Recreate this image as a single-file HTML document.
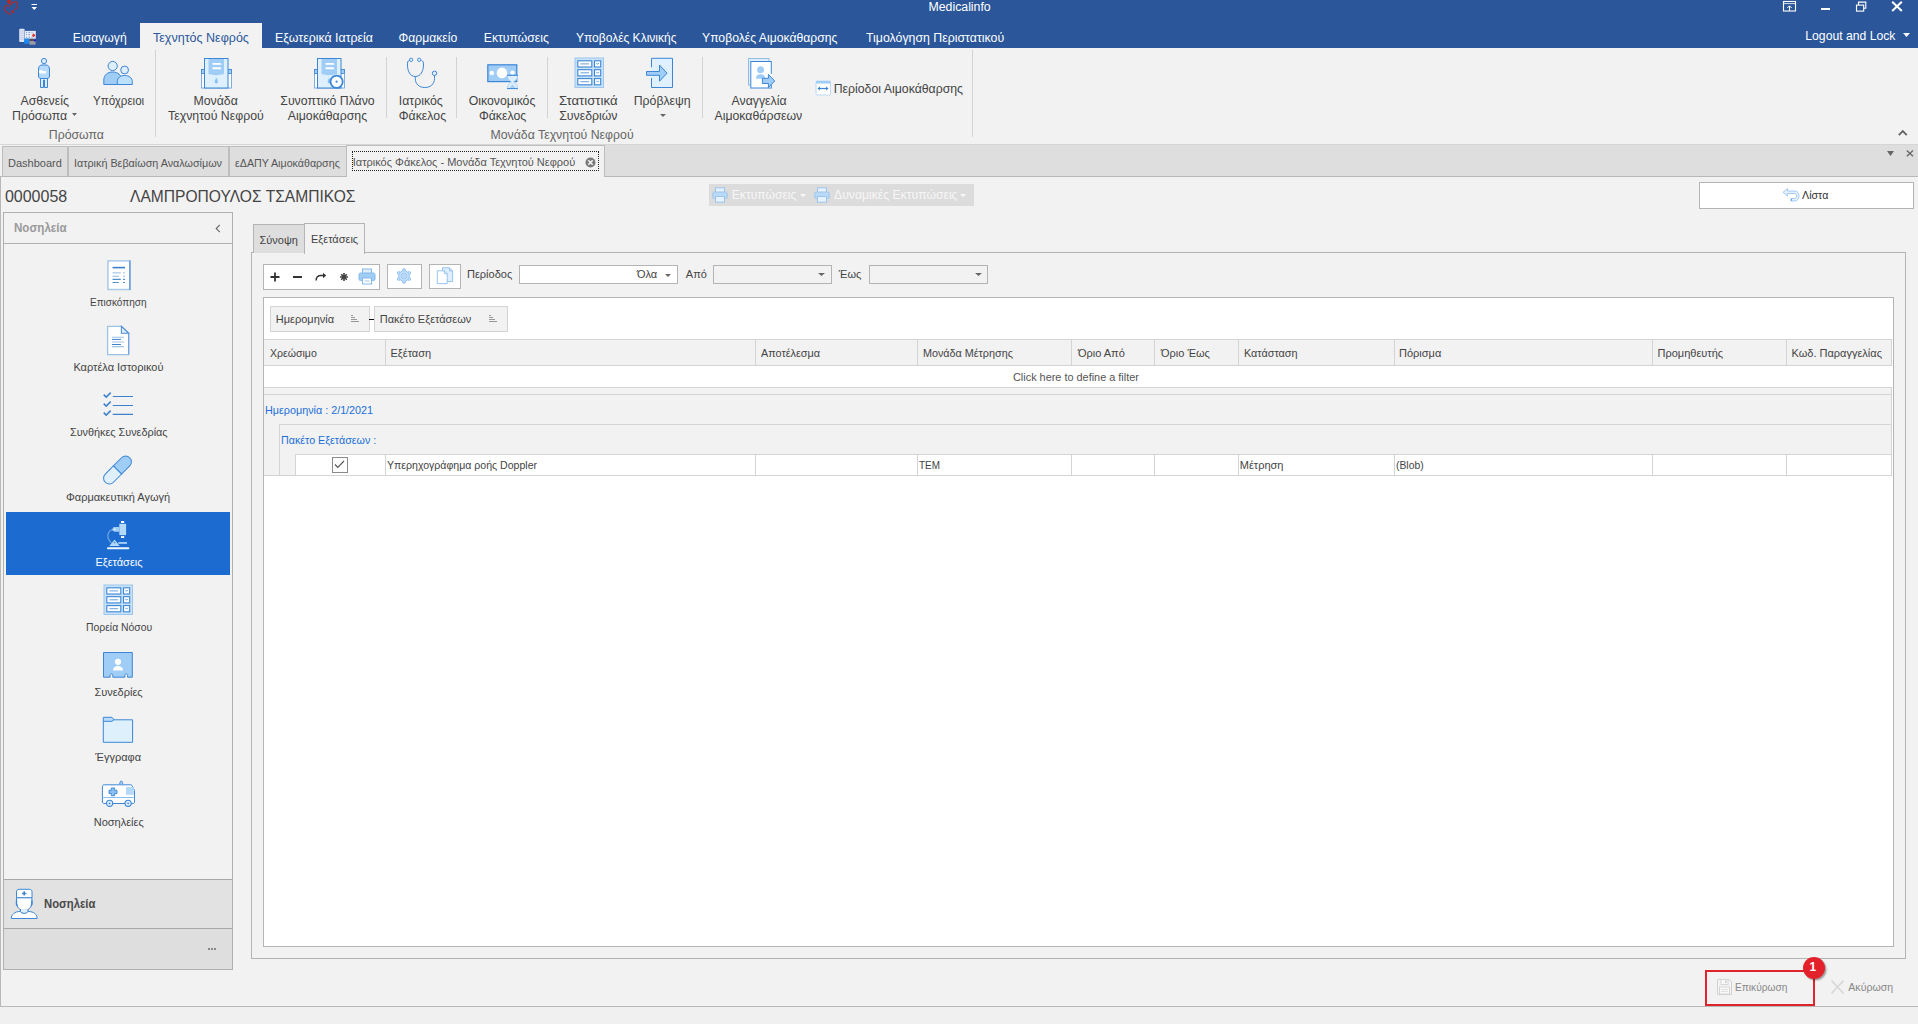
<!DOCTYPE html>
<html><head><meta charset="utf-8">
<style>
html,body{margin:0;padding:0;}
body{width:1918px;height:1024px;position:relative;overflow:hidden;background:#f2f2f2;font-family:"Liberation Sans",sans-serif;color:#444;}
.a{position:absolute;}
.t{position:absolute;white-space:nowrap;line-height:1;}
svg{position:absolute;overflow:visible;}
.f12{font-size:12.3px;}
.f11{font-size:11px;}
.rt{color:#444;}
.sep{position:absolute;width:1px;background:#d3d3d3;}
</style></head><body>

<!-- TITLE BAR -->
<div class="a" style="left:0;top:0;width:1918px;height:48px;background:#2b579a;"></div>
<svg style="left:0;top:0" width="24" height="18" viewBox="0 0 24 18">
<ellipse cx="9" cy="1.8" rx="1.9" ry="2.3" fill="#c0261c"/>
<path d="M9 5.8 C7 5.6 5.3 5.6 4.6 6.7 C4 8 4.3 9.8 6 11.5 C7.5 13 9.5 14 11 14.7" stroke="#c0261c" stroke-width="1.2" fill="none" opacity="0.8"/>
<path d="M10.2 4 L9.4 8.3" stroke="#c0261c" stroke-width="0.8" opacity="0.6"/>
<path d="M10.8 4.8 C12 3 14 1.6 16 1.6 C17.2 1.6 17.6 2.5 17.5 4 C17.4 6.5 16.5 8.5 15 10" stroke="#c0261c" stroke-width="1.2" fill="none" opacity="0.8"/>
<circle cx="12.6" cy="11.7" r="1.4" fill="#c0261c"/>
</svg>
<svg style="left:31px;top:3px" width="8" height="8" viewBox="0 0 8 8"><rect x="0.5" y="1" width="5.5" height="1" fill="#fff"/><path d="M0.5 4 L6 4 L3.25 7 Z" fill="#fff"/></svg>
<div class="t" style="left:928.5px;top:0.8px;font-size:12.3px;color:#fff;">Medicalinfo</div>
<!-- window buttons -->
<svg style="left:1782px;top:1px" width="15" height="11" viewBox="0 0 15 11"><rect x="1.5" y="0.5" width="12" height="9.5" fill="none" stroke="#fff" stroke-width="1.1"/><path d="M1.5 2.6 H13.5" stroke="#fff" stroke-width="0.8"/><path d="M7.5 10 V5 M5.3 7 L7.5 4.8 L9.7 7" stroke="#fff" stroke-width="1" fill="none"/></svg>
<div class="a" style="left:1821px;top:8px;width:9px;height:2px;background:#fff;"></div>
<svg style="left:1855px;top:1px" width="12" height="11" viewBox="0 0 12 11"><rect x="1.5" y="4.1" width="7.2" height="6" fill="none" stroke="#fff" stroke-width="1.1"/><path d="M3.5 4 V1.1 H10.8 V7.3 H8.8" fill="none" stroke="#fff" stroke-width="1.1"/></svg>
<svg style="left:1891px;top:1px" width="12" height="11" viewBox="0 0 12 11"><path d="M1.2 0.8 L10.8 10 M10.8 0.8 L1.2 10" stroke="#fff" stroke-width="2"/></svg>

<!-- app icon -->
<svg style="left:16px;top:26px" width="24" height="22" viewBox="0 0 24 22">
<rect x="3.2" y="2.8" width="5.4" height="13.1" rx="1" fill="#dfe5f5"/>
<path d="M3.8 5 H8 M3.8 7.2 H8 M3.8 9.4 H8 M3.8 11.6 H8 M3.8 13.2 H8" stroke="#b8c6e6" stroke-width="0.7"/>
<rect x="9" y="4.9" width="10.8" height="7.8" fill="#e8ecf8"/>
<path d="M10 6.4 h1 M12.5 6.4 h1.5 M15.5 6.4 h1 M10 8.6 h1 M12.5 8.6 h1.5 M10 11.3 h1 M12.5 11.3 h1.5 M15.5 11.3 h1" stroke="#6a8fd0" stroke-width="0.9"/>
<path d="M17.6 7.2 L19.4 9.5 L17.6 11.2 L15.8 9.5 Z" fill="#e03a30"/>
<rect x="8.2" y="12.7" width="5.1" height="5.1" fill="#1a88f0"/>
<rect x="13.5" y="12.9" width="6.1" height="5.8" fill="#9a9aa4"/>
<rect x="13.7" y="13" width="4" height="2" fill="#5a4a40"/>
<rect x="17.8" y="13.3" width="2" height="2" fill="#1010d0"/>
</svg>

<!-- ribbon tabs -->
<div class="a" style="left:140px;top:23px;width:122px;height:25px;background:#f2f2f2;"></div>
<div class="t" style="left:72.8px;top:31.6px;font-size:12.2px;color:#fff;">Εισαγωγή</div>
<div class="t" style="left:152.5px;top:31.6px;font-size:12.2px;color:#2b579a;transform:scaleX(1.027);transform-origin:0 0;">Τεχνητός Νεφρός</div>
<div class="t" style="left:274.8px;top:31.6px;font-size:12.2px;color:#fff;transform:scaleX(1.015);transform-origin:0 0;">Εξωτερικά Ιατρεία</div>
<div class="t" style="left:398.5px;top:31.6px;font-size:12.2px;color:#fff;">Φαρμακείο</div>
<div class="t" style="left:483.8px;top:31.6px;font-size:12.2px;color:#fff;">Εκτυπώσεις</div>
<div class="t" style="left:575.5px;top:31.6px;font-size:12.2px;color:#fff;transform:scaleX(0.985);transform-origin:0 0;">Υποβολές Κλινικής</div>
<div class="t" style="left:702px;top:31.6px;font-size:12.2px;color:#fff;">Υποβολές Αιμοκάθαρσης</div>
<div class="t" style="left:865.5px;top:31.6px;font-size:12.2px;color:#fff;transform:scaleX(1.012);transform-origin:0 0;">Τιμολόγηση Περιστατικού</div>
<div class="t" style="left:1805.3px;top:29.6px;font-size:12.2px;color:#fff;">Logout and Lock</div>
<svg style="left:1903px;top:33px" width="7" height="4" viewBox="0 0 7 4"><path d="M0 0 H7 L3.5 4 Z" fill="#fff"/></svg>

<!-- RIBBON -->
<div class="a" style="left:0;top:144px;width:1918px;height:1px;background:#d6d6d6;"></div>
<div class="sep" style="left:155px;top:50px;height:87px;"></div>
<div class="sep" style="left:386px;top:57px;height:61px;"></div>
<div class="sep" style="left:456px;top:57px;height:61px;"></div>
<div class="sep" style="left:547px;top:57px;height:61px;"></div>
<div class="sep" style="left:702px;top:57px;height:61px;"></div>
<div class="sep" style="left:972px;top:50px;height:87px;"></div>
<svg style="left:1898px;top:130px" width="10" height="6" viewBox="0 0 10 6"><path d="M0.8 5.2 L4.8 1.2 L8.8 5.2" fill="none" stroke="#666" stroke-width="1.9"/></svg>

<!-- ribbon item text -->
<div class="t f12" style="left:20.5px;top:95px;">Ασθενείς</div>
<div class="t f12" style="left:12px;top:110.4px;">Πρόσωπα</div>
<svg style="left:72px;top:113px" width="5" height="3" viewBox="0 0 5 3"><path d="M0 0H5L2.5 3Z" fill="#666"/></svg>
<div class="t f12" style="left:92.8px;top:95px;transform:scaleX(0.94);transform-origin:0 0;">Υπόχρειοι</div>
<div class="t f12" style="left:48.8px;top:128.9px;color:#666;">Πρόσωπα</div>

<div class="t f12" style="left:193.5px;top:95.2px;">Μονάδα</div>
<div class="t f12" style="left:168.1px;top:110.4px;">Τεχνητού Νεφρού</div>
<div class="t f12" style="left:280.3px;top:95.2px;">Συνοπτικό Πλάνο</div>
<div class="t f12" style="left:287.8px;top:110.4px;">Αιμοκάθαρσης</div>
<div class="t f12" style="left:398.8px;top:95.2px;">Ιατρικός</div>
<div class="t f12" style="left:398.8px;top:110.4px;">Φάκελος</div>
<div class="t f12" style="left:468.7px;top:95.2px;">Οικονομικός</div>
<div class="t f12" style="left:478.9px;top:110.4px;">Φάκελος</div>
<div class="t f12" style="left:559.2px;top:95.2px;transform:scaleX(1.07);transform-origin:0 0;">Στατιστικά</div>
<div class="t f12" style="left:559.2px;top:110.4px;">Συνεδριών</div>
<div class="t f12" style="left:633.7px;top:95.2px;">Πρόβλεψη</div>
<svg style="left:659.5px;top:113.5px" width="6" height="3" viewBox="0 0 6 3"><path d="M0 0H6L3 3Z" fill="#666"/></svg>
<div class="t f12" style="left:731.5px;top:95.2px;">Αναγγελία</div>
<div class="t f12" style="left:714.5px;top:110.4px;">Αιμοκαθάρσεων</div>
<div class="t f12" style="left:833.7px;top:83.4px;">Περίοδοι Αιμοκάθαρσης</div>
<div class="t f12" style="left:490.5px;top:129.3px;color:#666;">Μονάδα Τεχνητού Νεφρού</div>

<!-- Ασθενείς person -->
<svg style="left:37px;top:57px" width="14" height="32" viewBox="0 0 14 32">
<circle cx="7" cy="4" r="2.6" fill="#deeefd" stroke="#3d86d6" stroke-width="1"/>
<path d="M3.5 21.5 V30.5 H6.5 V23 H7.5 V30.5 H10.5 V21.5 Z" fill="#deeefd" stroke="#3d86d6" stroke-width="1"/>
<path d="M1.5 12 C1.5 9 3.5 8 5 8 H9 C10.5 8 12.5 9 12.5 12 V19 C12.5 20.5 11.5 21.5 10 21.5 H4 C2.5 21.5 1.5 20.5 1.5 19 Z" fill="#b4d9fb" stroke="#3d86d6" stroke-width="1"/>
<path d="M2 13.5 C3.5 12.5 5 13 6 14 H8.5 C9.5 14.5 9.5 16.5 8 16.5 H3 C2 16 1.5 14.5 2 13.5 Z" fill="#fff"/>
</svg>
<!-- Υπόχρειοι -->
<svg style="left:103px;top:60px" width="31" height="26" viewBox="0 0 31 26">
<circle cx="9.7" cy="6" r="4.6" fill="#deeefd" stroke="#3d86d6" stroke-width="1"/>
<path d="M0.8 24.5 V20 C0.8 15 4.5 12 9.7 12 C14.9 12 18.6 15 18.6 20 V24.5 Z" fill="#9fcdf6" stroke="#3d86d6" stroke-width="1"/>
<circle cx="21.6" cy="10" r="3.9" fill="#deeefd" stroke="#3d86d6" stroke-width="1"/>
<path d="M14.3 24.5 V21.5 C14.3 18 17 15.5 21.6 15.5 C26.2 15.5 29.3 18 29.3 21.5 V24.5 Z" fill="#bde0fc" stroke="#3d86d6" stroke-width="1"/>
</svg>
<!-- Μονάδα Τεχνητού Νεφρού -->
<svg style="left:200px;top:57px" width="33" height="32" viewBox="0 0 33 32">
<rect x="1.5" y="12.5" width="30" height="18.5" fill="#fff" stroke="#3d86d6" stroke-width="0.8" opacity="0.8"/>
<rect x="1.5" y="12.5" width="30" height="4" fill="#9fcdf6" stroke="#3d86d6" stroke-width="0.8"/>
<rect x="4.5" y="1.5" width="23.5" height="29.5" fill="#deeffd" stroke="#3d86d6" stroke-width="1"/>
<path d="M8.5 2 H24 V17 C19 18.5 13.5 18.5 8.5 17 Z" fill="#9fcdf6"/>
<path d="M12.5 6 H20.5 L21.5 7.8 H12.5 Z M12.5 10.3 H20.5 L21.5 12.2 H12.5 Z" fill="#fff"/>
<path d="M16.3 20.8 C15 22.8 14.7 23.8 14.7 24.8 A1.6 1.6 0 0 0 17.9 24.8 C17.9 23.8 17.6 22.8 16.3 20.8 Z" fill="#86c2f5"/>
</svg>
<!-- Συνοπτικό Πλάνο -->
<svg style="left:313px;top:57px" width="35" height="34" viewBox="0 0 35 34">
<rect x="1.5" y="12.5" width="30" height="18.5" fill="#fff" stroke="#3d86d6" stroke-width="0.8" opacity="0.8"/>
<rect x="1.5" y="12.5" width="30" height="4" fill="#9fcdf6" stroke="#3d86d6" stroke-width="0.8"/>
<rect x="4.5" y="1.5" width="23.5" height="29.5" fill="#deeffd" stroke="#3d86d6" stroke-width="1"/>
<path d="M8.5 2 H24 V17 C19 18.5 13.5 18.5 8.5 17 Z" fill="#9fcdf6"/>
<path d="M12.5 6 H20.5 L21.5 7.8 H12.5 Z M12.5 10.3 H20.5 L21.5 12.2 H12.5 Z" fill="#fff"/>
<path d="M16.3 20.8 C15 22.8 14.7 23.8 14.7 24.8 A1.6 1.6 0 0 0 17.9 24.8 C17.9 23.8 17.6 22.8 16.3 20.8 Z" fill="#86c2f5"/>
<circle cx="23.6" cy="24.7" r="6.1" fill="#fff" stroke="#3d86d6" stroke-width="1.8"/>
<circle cx="23.6" cy="24.7" r="1.1" fill="#3d86d6"/>
</svg>
<!-- Stethoscope -->
<svg style="left:405px;top:57px" width="33" height="33" viewBox="0 0 33 33">
<path d="M4.5 3.5 C2.5 4 2.5 5 2.5 8 C2.5 14 5 19.5 10.3 19.5 C15.6 19.5 18.5 14 18.5 8 C18.5 5 18 4 16.5 3.5" fill="none" stroke="#3d86d6" stroke-width="1"/>
<circle cx="6.1" cy="2.8" r="1.7" fill="#deeefd" stroke="#3d86d6" stroke-width="0.9"/>
<circle cx="14.2" cy="2.8" r="1.7" fill="#deeefd" stroke="#3d86d6" stroke-width="0.9"/>
<path d="M10.3 19.5 V21.5 C10.3 27 14 30.5 19.8 30.5 C25.6 30.5 29.5 27 29.5 21.5 V18.6" fill="none" stroke="#3d86d6" stroke-width="1"/>
<circle cx="29.5" cy="16.3" r="2.2" fill="#deeefd" stroke="#3d86d6" stroke-width="1"/>
</svg>
<!-- Οικονομικός -->
<svg style="left:486px;top:63px" width="33" height="27" viewBox="0 0 33 27">
<rect x="1.8" y="1.8" width="29" height="16.8" fill="#9fcdf6" stroke="#3d86d6" stroke-width="1.2"/>
<circle cx="16" cy="9.9" r="5.3" fill="#fff"/>
<circle cx="5.8" cy="10" r="2.3" fill="#fff"/>
<circle cx="26.5" cy="9.6" r="2.2" fill="#fff"/>
<path d="M21.5 12.5 H31.5 V14 C31.5 16.5 28.5 18 27.5 19 C28.5 20 31.5 21.5 31.5 24 V25.5 H21.5 V24 C21.5 21.5 24.5 20 25.5 19 C24.5 18 21.5 16.5 21.5 14 Z" fill="#deeefd" stroke="#9fcdf6" stroke-width="0.8"/>
<path d="M21 12.3 H32 M21 25.6 H32" stroke="#3d86d6" stroke-width="1"/>
<path d="M23.5 24.8 L26.5 21.5 L29.5 24.8 Z" fill="#9fcdf6"/>
</svg>
<!-- Στατιστικά -->
<svg style="left:574px;top:57px" width="31" height="32" viewBox="0 0 31 32">
<rect x="1" y="1" width="28.5" height="29.5" fill="#c8e2f8" stroke="#9cc6ec" stroke-width="1"/>
<g fill="#fff" stroke="#3d86d6" stroke-width="1.1">
<rect x="3.8" y="3.8" width="14" height="6.2"/><rect x="20.5" y="3.8" width="6.2" height="6.2"/>
<rect x="3.8" y="12.7" width="14" height="6.2"/><rect x="20.5" y="12.7" width="6.2" height="6.2"/>
<rect x="3.8" y="21.6" width="14" height="6.2"/><rect x="20.5" y="21.6" width="6.2" height="6.2"/>
</g>
<g fill="none" stroke="#3d86d6" stroke-width="0.8">
<path d="M6.5 6.9 H15 M6.5 15.8 H15 M6.5 24.7 H15"/>
<path d="M22.3 6 L23.6 7.3 L24.9 6 M22.3 14.9 L23.6 16.2 L24.9 14.9 M22.3 23.8 L23.6 25.1 L24.9 23.8"/>
</g>
</svg>
<!-- Πρόβλεψη -->
<svg style="left:645px;top:57px" width="30" height="32" viewBox="0 0 30 32">
<path d="M6.5 10.3 V1.3 H27.5 V30.5 H6.5 V21" fill="#dff0fe" stroke="#3d86d6" stroke-width="1"/>
<path d="M1.5 14.5 H14.5 V8 L22 16.2 L14.5 24.2 V18.3 H1.5 Z" fill="#9fcdf6" stroke="#3d86d6" stroke-width="1"/>
</svg>
<!-- Αναγγελία -->
<svg style="left:747px;top:57px" width="30" height="32" viewBox="0 0 30 32">
<rect x="1.5" y="1.5" width="20.5" height="26.5" fill="#deeefd" stroke="#8fbde8" stroke-width="1"/>
<rect x="3.8" y="4.5" width="20.5" height="26.5" fill="#fff" stroke="#3d86d6" stroke-width="1"/>
<circle cx="13.6" cy="12.7" r="3.5" fill="#9fcdf6"/>
<path d="M8.9 21.8 C8.9 18.5 11 17.2 13.6 17.2 C16.2 17.2 18.2 18.5 18.2 21.8 Z" fill="#9fcdf6"/>
<rect x="20" y="17" width="5" height="9" fill="#fff"/>
<path d="M15.4 21.3 H21.4 V17.4 L27.7 24 L21.4 30.6 V26.5 H15.4 Z" fill="#9fcdf6" stroke="#3d86d6" stroke-width="1"/>
</svg>
<!-- Περίοδοι small -->
<svg style="left:815px;top:80px" width="17" height="17" viewBox="0 0 17 17">
<rect x="1" y="1" width="14.5" height="14" rx="1" fill="#fff" stroke="#bcdaf5" stroke-width="1"/>
<rect x="1" y="1" width="14.5" height="2.5" fill="#9fcdf6"/>
<path d="M3.5 8.5 H12.5" stroke="#3d86d6" stroke-width="1.2"/>
<path d="M2.5 8.5 L5 6.5 V10.5 Z M13.5 8.5 L11 6.5 V10.5 Z" fill="#3d86d6"/>
</svg>


<!-- DOC TABS -->
<div class="a" style="left:0;top:145px;width:1918px;height:862px;background:#f2f2f2;"></div>

<div class="a" style="left:605px;top:145px;width:1313px;height:31px;background:#dedede;"></div>
<div class="a" style="left:0;top:176px;width:1918px;height:1px;background:#b8b8b8;"></div>
<div class="a" style="left:2px;top:146px;width:64px;height:29px;background:#dedede;border:1px solid #bdbdbd;border-bottom:none;"></div>
<div class="a" style="left:68px;top:146px;width:159px;height:29px;background:#dedede;border:1px solid #bdbdbd;border-bottom:none;"></div>
<div class="a" style="left:229px;top:146px;width:116px;height:29px;background:#dedede;border:1px solid #bdbdbd;border-bottom:none;"></div>
<div class="a" style="left:346px;top:145px;width:257px;height:31px;background:#f2f2f2;border:1px solid #bdbdbd;border-bottom:none;"></div><div class="a" style="left:347px;top:176px;width:257px;height:1px;background:#f2f2f2;"></div>
<div class="a" style="left:352px;top:151px;width:245px;height:18px;border:1px dotted #222;"></div>
<div class="t f11" style="left:8px;top:157.7px;color:#555;">Dashboard</div>
<div class="t f11" style="left:74px;top:157.7px;color:#555;transform:scaleX(0.98);transform-origin:0 0;">Ιατρική Βεβαίωση Αναλωσίμων</div>
<div class="t f11" style="left:234.8px;top:157.7px;color:#555;transform:scaleX(0.97);transform-origin:0 0;">εΔΑΠΥ Αιμοκάθαρσης</div>
<div class="t f11" style="left:352.8px;top:157.2px;color:#555;">Ιατρικός Φάκελος - Μονάδα Τεχνητού Νεφρού</div>
<svg style="left:585px;top:157px" width="11" height="11" viewBox="0 0 11 11"><circle cx="5.5" cy="5.5" r="5" fill="#7a7a7a"/><path d="M3.3 3.3 L7.7 7.7 M7.7 3.3 L3.3 7.7" stroke="#f2f2f2" stroke-width="1.6"/></svg>
<svg style="left:1887px;top:151px" width="7" height="5" viewBox="0 0 7 5"><path d="M0 0 H7 L3.5 5 Z" fill="#666"/></svg>
<svg style="left:1906px;top:150px" width="8" height="7" viewBox="0 0 8 7"><path d="M0.8 0.5 L7 6.2 M7 0.5 L0.8 6.2" stroke="#666" stroke-width="1.3"/></svg>

<!-- content frame -->
<div class="a" style="left:0;top:177px;width:1px;height:830px;background:#b8b8b8;"></div>
<div class="a" style="left:0;top:1006px;width:1918px;height:1px;background:#b8b8b8;"></div>
<div class="a" style="left:0;top:1007px;width:1918px;height:17px;background:#f0f0f0;"></div>

<!-- patient header -->
<div class="t" style="left:4.9px;top:189px;font-size:16px;color:#444;">0000058</div>
<div class="t" style="left:130px;top:188.8px;font-size:15.6px;color:#444;">ΛΑΜΠΡΟΠΟΥΛΟΣ ΤΣΑΜΠΙΚΟΣ</div>

<!-- print toolbar (disabled) -->
<div class="a" style="left:709px;top:184px;width:265px;height:22px;background:#dcdcdc;"></div>
<svg style="left:712px;top:187px" width="16" height="16" viewBox="0 0 16 16"><rect x="3.5" y="0.8" width="9" height="5" fill="#e6f1fc" stroke="#9cc6ec" stroke-width="1"/><rect x="0.8" y="5" width="14.4" height="6.5" rx="1.5" fill="#b9d9f6" stroke="#9cc6ec" stroke-width="1"/><rect x="3.5" y="9.5" width="9" height="5.7" fill="#e6f1fc" stroke="#9cc6ec" stroke-width="1"/></svg>
<div class="t" style="left:731.8px;top:188.8px;font-size:12.1px;color:#f7f7f7;">Εκτυπώσεις</div>
<svg style="left:800px;top:194px" width="6" height="3" viewBox="0 0 6 3"><path d="M0 0H6L3 3Z" fill="#f7f7f7"/></svg>
<svg style="left:814px;top:187px" width="16" height="16" viewBox="0 0 16 16"><rect x="3.5" y="0.8" width="9" height="5" fill="#e6f1fc" stroke="#9cc6ec" stroke-width="1"/><rect x="0.8" y="5" width="14.4" height="6.5" rx="1.5" fill="#b9d9f6" stroke="#9cc6ec" stroke-width="1"/><rect x="3.5" y="9.5" width="9" height="5.7" fill="#e6f1fc" stroke="#9cc6ec" stroke-width="1"/></svg>
<div class="t" style="left:833.5px;top:188.8px;font-size:12.1px;color:#f7f7f7;transform:scaleX(1.008);transform-origin:0 0;">Δυναμικές Εκτυπώσεις</div>
<svg style="left:960px;top:194px" width="6" height="3" viewBox="0 0 6 3"><path d="M0 0H6L3 3Z" fill="#f7f7f7"/></svg>

<!-- Λίστα button -->
<div class="a" style="left:1699px;top:182px;width:213px;height:25px;background:#fff;border:1px solid #b4b4b4;"></div>
<svg style="left:1782px;top:187px" width="19" height="16" viewBox="0 0 19 16"><path d="M1 5.3 L5.6 1.5 V4 H13 C15.5 4 17 6.2 17 8.8 C17 11.5 15.5 14 13 14 H9 V11.5 H13 C14 11.5 14.5 10.2 14.5 8.8 C14.5 7.5 14 6.5 13 6.5 H5.6 V9 Z" fill="#e3f0fd" stroke="#9cc4ee" stroke-width="0.9" stroke-linejoin="round"/><path d="M9.3 11.6 V13.9" stroke="#6aa2e0" stroke-width="1"/></svg>
<div class="t f11" style="left:1802px;top:189.6px;color:#333;transform:scaleX(0.97);transform-origin:0 0;">Λίστα</div>


<!-- SIDEBAR -->
<div class="a" style="left:3px;top:212px;width:228px;height:756px;border:1px solid #b0b0b0;background:#f2f2f2;"></div>
<div class="a" style="left:4px;top:243px;width:228px;height:1px;background:#b0b0b0;"></div>
<div class="t" style="left:14px;top:221.6px;font-size:12px;font-weight:bold;color:#9a9a9a;transform:scaleX(0.965);transform-origin:0 0;">Νοσηλεία</div>
<svg style="left:215px;top:224px" width="6" height="9" viewBox="0 0 6 9"><path d="M4.8 0.8 L1.2 4.5 L4.8 8.2" fill="none" stroke="#666" stroke-width="1.1"/></svg>
<div class="a" style="left:6px;top:512px;width:224px;height:63px;background:#1b6bd1;"></div>
<div class="a" style="left:4px;top:879px;width:228px;height:1px;background:#a8a8a8;"></div>
<div class="a" style="left:4px;top:880px;width:228px;height:48px;background:#e2e2e2;"></div>
<div class="a" style="left:4px;top:928px;width:228px;height:1px;background:#a8a8a8;"></div>
<div class="a" style="left:4px;top:929px;width:228px;height:40px;background:#dedede;"></div>

<!-- nav labels -->
<div class="t f11" style="left:90.2px;top:296.9px;color:#444;transform:scaleX(0.91);transform-origin:0 0;">Επισκόπηση</div>
<div class="t f11" style="left:73.4px;top:362.1px;color:#444;">Καρτέλα Ιστορικού</div>
<div class="t f11" style="left:69.5px;top:426.9px;color:#444;transform:scaleX(0.985);transform-origin:0 0;">Συνθήκες Συνεδρίας</div>
<div class="t f11" style="left:66px;top:492.4px;color:#444;">Φαρμακευτική Αγωγή</div>
<div class="t f11" style="left:95.4px;top:556.9px;color:#fff;">Εξετάσεις</div>
<div class="t f11" style="left:86px;top:622.4px;color:#444;transform:scaleX(0.945);transform-origin:0 0;">Πορεία Νόσου</div>
<div class="t f11" style="left:94.4px;top:687.2px;color:#444;">Συνεδρίες</div>
<div class="t f11" style="left:95.3px;top:751.7px;color:#444;">Έγγραφα</div>
<div class="t f11" style="left:93.7px;top:816.5px;color:#444;">Νοσηλείες</div>
<div class="t" style="left:43.5px;top:897.8px;font-size:12px;font-weight:bold;color:#4a4a4a;transform:scaleX(0.94);transform-origin:0 0;">Νοσηλεία</div>
<div class="a" style="left:208px;top:948px;width:2px;height:2px;background:#888;"></div><div class="a" style="left:211px;top:948px;width:2px;height:2px;background:#888;"></div><div class="a" style="left:214px;top:948px;width:2px;height:2px;background:#888;"></div>

<!-- nav icons -->
<svg style="left:106px;top:259px" width="25" height="32" viewBox="0 0 25 32">
<rect x="1.9" y="1.9" width="22" height="28.6" fill="#fff" stroke="#a9c9e8" stroke-width="1.5"/>
<path d="M23.9 1.5 V30.9" stroke="#5d9bd8" stroke-width="1.4"/>
<path d="M6.5 8.6 H19" stroke="#3d80cc" stroke-width="1.6"/>
<path d="M6.5 13.9 H14.8 M17 13.9 H19" stroke="#a9c9e8" stroke-width="1.4"/>
<path d="M6.5 17.3 H12.8 M17 17.3 H19" stroke="#8bb6e0" stroke-width="1.1"/>
<path d="M6.5 20.4 H14.8 M17 20.4 H19 M6.5 23.5 H12.8 M17 23.5 H19" stroke="#4f8fd3" stroke-width="1.1"/>
</svg>
<svg style="left:106px;top:325px" width="25" height="31" viewBox="0 0 25 31">
<path d="M1.6 1.4 H15.4 L22.7 8.3 V29.6 H1.6 Z" fill="#fff" stroke="#9cc2e8" stroke-width="1.3"/>
<path d="M15.4 1.4 V8.3 H22.7 Z" fill="#deeefd" stroke="#4f8fd3" stroke-width="1.1"/>
<path d="M22.7 8.3 V29.6" stroke="#6aa2dc" stroke-width="1.1"/>
<path d="M5.9 12.2 H18 M5.9 17 H18 M5.9 21.6 H18" stroke="#9cc2e8" stroke-width="1.1"/>
<path d="M5.9 14.4 H15 M5.9 19.5 H15" stroke="#3d80cc" stroke-width="1"/>
</svg>
<svg style="left:102px;top:392px" width="32" height="25" viewBox="0 0 32 25">
<path d="M1.7 2.6 L4.2 5.1 L8.7 0.6 M1.7 11.6 L4.2 14.1 L8.7 9.6 M1.7 20.6 L4.2 23.1 L8.7 18.6" fill="none" stroke="#3d80cc" stroke-width="1.5"/>
<path d="M10.7 4.5 H31 M10.7 13.5 H31 M10.7 22.4 H31" stroke="#3d80cc" stroke-width="1.1"/>
</svg>
<svg style="left:99.3px;top:452px" width="37" height="36" viewBox="0 0 37 36">
<g transform="translate(18.5 18) rotate(-45)">
<path d="M0 -5.8 H11.5 A5.8 5.8 0 0 1 11.5 5.8 H0 Z" fill="#9fcdf6" stroke="#3d86d6" stroke-width="1"/>
<path d="M0 -5.8 H-11.5 A5.8 5.8 0 0 0 -11.5 5.8 H0 Z" fill="#deeffd" stroke="#3d86d6" stroke-width="1"/>
</g>
</svg>
<svg style="left:105px;top:520px" width="26" height="31" viewBox="0 0 26 31">
<path d="M8.5 9.3 C3 10 0.3 17 6.2 22.8" fill="none" stroke="#6aa2e0" stroke-width="1.3"/>
<rect x="2" y="27.2" width="22.3" height="2.1" rx="0.8" fill="#eef6fe"/>
<path d="M4.3 25.9 L9.5 19.6 L14.7 25.9 Z" fill="#b4d9fb"/>
<circle cx="9.5" cy="22.5" r="0.9" fill="#5d9be0"/>
<rect x="13.3" y="22" width="8.7" height="1.9" fill="#9fcdf6"/>
<rect x="14.3" y="3.8" width="6.8" height="11.3" fill="#b4d9fb"/>
<rect x="16" y="1" width="3.2" height="2" fill="#fff"/>
<rect x="16" y="16.1" width="3.2" height="1.9" fill="#fff"/>
<path d="M9.75 6.9 H14.3 V11.8 H9.75 A2.45 2.45 0 0 1 9.75 6.9 Z" fill="#9fcdf6"/>
<circle cx="9.8" cy="9.35" r="0.8" fill="#fff"/>
</svg>
<svg style="left:103px;top:584px" width="31" height="32" viewBox="0 0 31 32">
<rect x="1" y="1" width="28.5" height="29.5" fill="#c8e2f8" stroke="#9cc6ec" stroke-width="1"/>
<g fill="#fff" stroke="#3d86d6" stroke-width="1.1">
<rect x="3.8" y="3.8" width="14" height="6.2"/><rect x="20.5" y="3.8" width="6.2" height="6.2"/>
<rect x="3.8" y="12.7" width="14" height="6.2"/><rect x="20.5" y="12.7" width="6.2" height="6.2"/>
<rect x="3.8" y="21.6" width="14" height="6.2"/><rect x="20.5" y="21.6" width="6.2" height="6.2"/>
</g>
<g fill="none" stroke="#3d86d6" stroke-width="0.8">
<path d="M6.5 6.9 H15 M6.5 15.8 H15 M6.5 24.7 H15"/>
<path d="M22.3 6 L23.6 7.3 L24.9 6 M22.3 14.9 L23.6 16.2 L24.9 14.9 M22.3 23.8 L23.6 25.1 L24.9 23.8"/>
</g>
</svg>
<svg style="left:102px;top:651px" width="32" height="28" viewBox="0 0 32 28">
<path d="M1.5 1.5 H30.3 V26.2 H25.6 V24.5 C25.6 23.5 25 22.8 24.3 22.8 C23.5 22.8 22.9 23.5 22.9 24.5 V26.2 H10.8 V24.5 C10.8 23.5 10.2 22.8 9.5 22.8 C8.7 22.8 8.1 23.5 8.1 24.5 V26.2 H1.5 Z" fill="#9fcdf6" stroke="#3d86d6" stroke-width="1"/>
<circle cx="16" cy="10.8" r="3.1" fill="#fff"/>
<path d="M11 19.6 C11 16.5 13 15 16 15 C19 15 21 16.5 21 19.6 Z" fill="#fff"/>
</svg>
<svg style="left:102px;top:716px" width="32" height="28" viewBox="0 0 32 28">
<path d="M1.3 5 V26.3 H30.6 V3.8 H11 Z" fill="#dff0fd" stroke="#3d86d6" stroke-width="1"/>
<path d="M1.3 1.3 H10 L12 3.5 L10 5.3 H1.3 Z" fill="#b9dcfb" stroke="#3d86d6" stroke-width="1"/>
</svg>
<svg style="left:101px;top:780px" width="35" height="29" viewBox="0 0 35 29">
<path d="M18.3 4.5 L19.5 1.2 H21 L22.2 4.5 Z" fill="#9fcdf6" stroke="#3d86d6" stroke-width="0.8"/>
<path d="M3.5 4.6 H29.3 C30 4.6 30.6 5 31 5.6 L33.5 10.5 V22 C33.5 23 32.8 23.5 32 23.5 H3 C2 23.5 1.4 22.8 1.4 22 V6.8 C1.4 5.6 2.3 4.6 3.5 4.6 Z" fill="#fff" stroke="#3d86d6" stroke-width="1"/>
<path d="M1.8 5 H30" stroke="#9cc2e8" stroke-width="1"/>
<rect x="25" y="7" width="7.8" height="7.8" fill="#b4d9fb"/>
<path d="M1.5 17.5 H33.5" stroke="#86c0f4" stroke-width="1"/>
<path d="M10.3 8 H13.7 V10.3 H16 V13.5 H13.7 V15.8 H10.3 V13.5 H8 V10.3 H10.3 Z" fill="#86c0f4" stroke="#3d86d6" stroke-width="0.9"/>
<circle cx="8.6" cy="23.3" r="3.1" fill="#deeefd" stroke="#3d86d6" stroke-width="1.1"/><circle cx="8.6" cy="23.3" r="0.9" fill="#3d86d6"/>
<circle cx="27.1" cy="23.3" r="3.1" fill="#deeefd" stroke="#3d86d6" stroke-width="1.1"/><circle cx="27.1" cy="23.3" r="0.9" fill="#3d86d6"/>
</svg>
<svg style="left:10px;top:888px" width="28" height="32" viewBox="0 0 28 32">
<path d="M3.3 10 C3.3 6.5 4 5 7 5 H16" fill="none"/>
<path d="M6.5 9.8 V3.8 C6.5 2.3 7.5 1.3 9 1.3 H19.5 C21 1.3 22 2.3 22 3.8 V9.8 Z" fill="#fff" stroke="#3d86d6" stroke-width="1"/>
<path d="M14.2 3.2 V7.6 M12 5.4 H16.4" stroke="#3d86d6" stroke-width="1.5"/>
<path d="M6.5 9.8 V15 C6.5 19 9.8 22.5 14.2 22.5 C18.6 22.5 21.9 19 21.9 15 V9.8 Z" fill="#fff" stroke="#3d86d6" stroke-width="1"/>
<path d="M6.5 12.5 V16 C6.8 17 7.2 17.5 7.6 17.6 M21.9 12.5 V16 C21.6 17 21.2 17.5 20.8 17.6" stroke="#3d86d6" stroke-width="1.4" fill="none"/>
<path d="M10.5 21 V24 C12 26 16.5 26 18 24 V21" fill="#deeefd" stroke="#3d86d6" stroke-width="1"/>
<path d="M1.3 30.5 C1.3 26.5 4.5 23.5 10.2 23.5 C12 26 16.5 26 18.2 23.5 C24 23.5 27.2 26.5 27.2 30.5 Z" fill="#fff" stroke="#3d86d6" stroke-width="1"/>
</svg>

<!-- TAB CONTROL -->
<div class="a" style="left:251px;top:252px;width:1653px;height:705px;border:1px solid #b4b4b4;background:#f2f2f2;"></div>
<div class="a" style="left:253px;top:224px;width:51px;height:28px;background:#dedede;border:1px solid #b4b4b4;border-bottom:none;"></div>
<div class="a" style="left:304px;top:223px;width:59px;height:30px;background:#f2f2f2;border:1px solid #b4b4b4;border-bottom:none;"></div>
<div class="t f11" style="left:259.5px;top:234.6px;color:#444;">Σύνοψη</div>
<div class="t f11" style="left:311px;top:233.5px;color:#444;">Εξετάσεις</div>

<!-- toolbar -->
<div class="a" style="left:263px;top:264px;width:115px;height:24px;background:#fff;border:1px solid #b4b4b4;"></div>
<svg style="left:270px;top:272px" width="10" height="10" viewBox="0 0 10 10"><path d="M5 0.5 V9.5 M0.5 5 H9.5" stroke="#333" stroke-width="1.8"/></svg>
<div class="a" style="left:293px;top:276px;width:9px;height:2px;background:#333;"></div>
<svg style="left:315px;top:272px" width="12" height="9" viewBox="0 0 12 9"><path d="M1.2 8.5 C1 5 3 3.5 6 3.5 H9" fill="none" stroke="#333" stroke-width="1.5"/><path d="M8 0.8 L11.2 3.5 L8 6.2 Z" fill="#333"/></svg>
<svg style="left:339px;top:272px" width="10" height="10" viewBox="0 0 10 10"><path d="M5 1 V9 M1 5 H9 M2.2 2.2 L7.8 7.8 M7.8 2.2 L2.2 7.8" stroke="#444" stroke-width="1.6"/></svg>
<svg style="left:358px;top:268px" width="18" height="17" viewBox="0 0 18 17"><rect x="4.5" y="1" width="9" height="5.5" fill="#deeefd" stroke="#86b8e8" stroke-width="1"/><rect x="1" y="5" width="16" height="7.5" rx="1.5" fill="#9fcdf6" stroke="#86b8e8" stroke-width="1"/><rect x="4.5" y="10" width="9" height="6" fill="#fff" stroke="#86b8e8" stroke-width="1"/><path d="M6.5 13 H11.5" stroke="#86b8e8" stroke-width="0.8"/></svg>
<div class="a" style="left:387px;top:264px;width:33px;height:23px;background:#fff;border:1px solid #b4b4b4;"></div>
<svg style="left:396px;top:268px" width="16" height="16" viewBox="0 0 18 18">
<g fill="#c5e0fa" stroke="#8dbdf0" stroke-width="0.9">
<path d="M9 2.2 L14.9 5.6 V12.4 L9 15.8 L3.1 12.4 V5.6 Z"/>
<circle cx="9" cy="2.2" r="1.6"/><circle cx="9" cy="15.8" r="1.6"/>
<circle cx="14.9" cy="5.6" r="1.6"/><circle cx="14.9" cy="12.4" r="1.6"/>
<circle cx="3.1" cy="5.6" r="1.6"/><circle cx="3.1" cy="12.4" r="1.6"/>
</g>
<path d="M9 3.6 L13.6 6.3 V11.7 L9 14.4 L4.4 11.7 V6.3 Z" fill="#c5e0fa"/>
<circle cx="9" cy="9" r="3.3" fill="#e3f0fd" stroke="#8dbdf0" stroke-width="0.9"/>
<rect x="7.6" y="7.6" width="2.8" height="2.8" fill="#c5e0fa" stroke="#8dbdf0" stroke-width="0.7"/>
</svg>
<div class="a" style="left:429px;top:264px;width:30px;height:23px;background:#fff;border:1px solid #b4b4b4;"></div>
<svg style="left:436px;top:267px" width="18" height="18" viewBox="0 0 18 18">
<path d="M6.5 0.8 H13.5 L16.6 3.9 V14.6 H6.5 Z" fill="#deeefd" stroke="#8dbdf0" stroke-width="0.9"/>
<path d="M13.5 0.8 V3.9 H16.6" fill="none" stroke="#8dbdf0" stroke-width="0.8"/>
<path d="M1.3 3.8 H8.3 L11.2 6.7 V16.6 H1.3 Z" fill="#fff" stroke="#8dbdf0" stroke-width="0.9"/>
<path d="M8.3 3.8 V6.7 H11.2" fill="none" stroke="#8dbdf0" stroke-width="0.8"/>
</svg>
<div class="t f11" style="left:467px;top:268.8px;color:#444;">Περίοδος</div>
<div class="a" style="left:519px;top:265px;width:157px;height:17px;background:#fff;border:1px solid #b4b4b4;"></div>
<div class="t f11" style="left:637px;top:269px;color:#444;">Όλα</div>
<svg style="left:665px;top:274px" width="6" height="3" viewBox="0 0 6 3"><path d="M0 0H6L3 3Z" fill="#666"/></svg>
<div class="t f11" style="left:685.8px;top:268.8px;color:#444;">Από</div>
<div class="a" style="left:713px;top:265px;width:117px;height:17px;background:#f2f2f2;border:1px solid #b4b4b4;"></div>
<svg style="left:818px;top:273px" width="7" height="3" viewBox="0 0 7 3"><path d="M0 0H7L3.5 3Z" fill="#666"/></svg>
<div class="t f11" style="left:838.8px;top:268.8px;color:#444;">Έως</div>
<div class="a" style="left:869px;top:265px;width:117px;height:17px;background:#f2f2f2;border:1px solid #b4b4b4;"></div>
<svg style="left:975px;top:273px" width="7" height="3" viewBox="0 0 7 3"><path d="M0 0H7L3.5 3Z" fill="#666"/></svg>

<!-- GRID -->
<div class="a" style="left:263px;top:297px;width:1629px;height:648px;border:1px solid #b4b4b4;background:#fff;"></div>
<div class="a" style="left:270px;top:306px;width:98px;height:24px;background:#f2f2f2;border:1px solid #d4d4d4;"></div>
<div class="a" style="left:369px;top:319px;width:5px;height:1px;background:#111;"></div>
<div class="a" style="left:374px;top:306px;width:132px;height:24px;background:#f2f2f2;border:1px solid #d4d4d4;"></div>
<div class="t f11" style="left:275.8px;top:314px;color:#444;">Ημερομηνία</div>
<div class="t f11" style="left:379.8px;top:314px;color:#444;">Πακέτο Εξετάσεων</div>
<svg style="left:351px;top:315px" width="9" height="7" viewBox="0 0 9 7"><path d="M0 0.5 H2 M0 2.5 H4 M0 4.5 H6 M0 6.5 H8" stroke="#999" stroke-width="1"/></svg>
<svg style="left:489px;top:315px" width="9" height="7" viewBox="0 0 9 7"><path d="M0 0.5 H2 M0 2.5 H4 M0 4.5 H6 M0 6.5 H8" stroke="#999" stroke-width="1"/></svg>

<!-- header row -->
<div class="a" style="left:264px;top:339px;width:1628px;height:1px;background:#d4d4d4;"></div>
<div class="a" style="left:264px;top:340px;width:1628px;height:25px;background:#f2f2f2;"></div>
<div class="a" style="left:264px;top:365px;width:1628px;height:1px;background:#d4d4d4;"></div>
<div class="a" style="left:385px;top:340px;width:1px;height:25px;background:#d4d4d4;"></div>
<div class="a" style="left:755px;top:340px;width:1px;height:25px;background:#d4d4d4;"></div>
<div class="a" style="left:917px;top:340px;width:1px;height:25px;background:#d4d4d4;"></div>
<div class="a" style="left:1071px;top:340px;width:1px;height:25px;background:#d4d4d4;"></div>
<div class="a" style="left:1154px;top:340px;width:1px;height:25px;background:#d4d4d4;"></div>
<div class="a" style="left:1238px;top:340px;width:1px;height:25px;background:#d4d4d4;"></div>
<div class="a" style="left:1394px;top:340px;width:1px;height:25px;background:#d4d4d4;"></div>
<div class="a" style="left:1652px;top:340px;width:1px;height:25px;background:#d4d4d4;"></div>
<div class="a" style="left:1786px;top:340px;width:1px;height:25px;background:#d4d4d4;"></div>
<div class="a" style="left:1891px;top:340px;width:1px;height:25px;background:#d4d4d4;"></div>
<div class="t f11" style="left:269.5px;top:348.3px;color:#444;transform:scaleX(0.96);transform-origin:0 0;">Χρεώσιμο</div>
<div class="t f11" style="left:390.5px;top:348.3px;color:#444;">Εξέταση</div>
<div class="t f11" style="left:761.3px;top:348.3px;color:#444;transform:scaleX(0.985);transform-origin:0 0;">Αποτέλεσμα</div>
<div class="t f11" style="left:922.5px;top:348.3px;color:#444;transform:scaleX(0.98);transform-origin:0 0;">Μονάδα Μέτρησης</div>
<div class="t f11" style="left:1078px;top:348.3px;color:#444;">Όριο Από</div>
<div class="t f11" style="left:1161px;top:348.3px;color:#444;">Όριο Έως</div>
<div class="t f11" style="left:1244.1px;top:348.3px;color:#444;transform:scaleX(0.985);transform-origin:0 0;">Κατάσταση</div>
<div class="t f11" style="left:1399px;top:348.3px;color:#444;">Πόρισμα</div>
<div class="t f11" style="left:1657.5px;top:348.3px;color:#444;">Προμηθευτής</div>
<div class="t f11" style="left:1791.5px;top:348.3px;color:#444;">Κωδ. Παραγγελίας</div>
<!-- filter row -->
<div class="t f11" style="left:1013px;top:371.6px;color:#555;transform:scaleX(0.99);transform-origin:0 0;">Click here to define a filter</div>
<div class="a" style="left:264px;top:387px;width:1628px;height:1px;background:#d4d4d4;"></div>
<div class="a" style="left:264px;top:388px;width:1628px;height:87px;background:#f2f2f2;"></div>
<div class="a" style="left:264px;top:394px;width:1628px;height:1px;background:#d4d4d4;"></div>
<div class="a" style="left:279px;top:424px;width:1613px;height:1px;background:#d4d4d4;"></div>
<div class="a" style="left:279px;top:424px;width:1px;height:51px;background:#d4d4d4;"></div>
<div class="a" style="left:295px;top:454px;width:1597px;height:1px;background:#d4d4d4;"></div>
<div class="a" style="left:295px;top:454px;width:1px;height:21px;background:#d4d4d4;"></div>
<div class="a" style="left:296px;top:455px;width:1596px;height:20px;background:#fff;"></div>
<div class="a" style="left:264px;top:475px;width:1628px;height:1px;background:#d4d4d4;"></div>
<div class="a" style="left:1891px;top:388px;width:1px;height:88px;background:#d4d4d4;"></div>
<div class="t f11" style="left:265.2px;top:404.7px;color:#1a6fd8;transform:scaleX(0.98);transform-origin:0 0;">Ημερομηνία : 2/1/2021</div>
<div class="t f11" style="left:281.2px;top:434.7px;color:#1a6fd8;transform:scaleX(0.975);transform-origin:0 0;">Πακέτο Εξετάσεων :</div>
<!-- data row -->
<div class="a" style="left:385px;top:455px;width:1px;height:20px;background:#d4d4d4;"></div>
<div class="a" style="left:755px;top:455px;width:1px;height:20px;background:#d4d4d4;"></div>
<div class="a" style="left:917px;top:455px;width:1px;height:20px;background:#d4d4d4;"></div>
<div class="a" style="left:1071px;top:455px;width:1px;height:20px;background:#d4d4d4;"></div>
<div class="a" style="left:1154px;top:455px;width:1px;height:20px;background:#d4d4d4;"></div>
<div class="a" style="left:1238px;top:455px;width:1px;height:20px;background:#d4d4d4;"></div>
<div class="a" style="left:1394px;top:455px;width:1px;height:20px;background:#d4d4d4;"></div>
<div class="a" style="left:1652px;top:455px;width:1px;height:20px;background:#d4d4d4;"></div>
<div class="a" style="left:1786px;top:455px;width:1px;height:20px;background:#d4d4d4;"></div>
<div class="a" style="left:332px;top:457px;width:14px;height:14px;background:#fff;border:1px solid #8a8a8a;"></div>
<svg style="left:334px;top:460px" width="11" height="9" viewBox="0 0 11 9"><path d="M1 4.5 L3.8 7.5 L10 1" fill="none" stroke="#555" stroke-width="1.1"/></svg>
<div class="t f11" style="left:387px;top:460px;color:#444;transform:scaleX(0.96);transform-origin:0 0;">Υπερηχογράφημα ροής Doppler</div>
<div class="t f11" style="left:918.8px;top:460px;color:#444;transform:scaleX(0.9);transform-origin:0 0;">TEM</div>
<div class="t f11" style="left:1239.8px;top:460px;color:#444;">Μέτρηση</div>
<div class="t f11" style="left:1396px;top:460px;color:#444;transform:scaleX(0.94);transform-origin:0 0;">(Blob)</div>

<!-- bottom buttons -->
<svg style="left:1716px;top:978px" width="17" height="18" viewBox="0 0 17 18"><path d="M1.5 1.5 H13 L15.5 4 V16.5 H1.5 Z" fill="#f4f4f4" stroke="#d2d2d2" stroke-width="1"/><rect x="5" y="1.5" width="7" height="5" fill="#fafafa" stroke="#d2d2d2" stroke-width="0.9"/><rect x="9" y="2.5" width="1.5" height="2.5" fill="#cfcfcf"/><rect x="3.5" y="9" width="10" height="7" fill="#fafafa" stroke="#d2d2d2" stroke-width="0.9"/><path d="M5 11.5 H12 M5 13.5 H12" stroke="#d8d8d8" stroke-width="0.8"/></svg>
<div class="t" style="left:1735.3px;top:982.3px;font-size:10.6px;color:#888;transform:scaleX(0.96);transform-origin:0 0;">Επικύρωση</div>
<svg style="left:1830px;top:979px" width="15" height="16" viewBox="0 0 15 16"><path d="M1.5 1.5 L13.5 14.5 M13.5 1.5 L1.5 14.5" stroke="#d6d6d6" stroke-width="1.6"/></svg>
<div class="t" style="left:1848.3px;top:982px;font-size:10.6px;color:#888;">Ακύρωση</div>
<div class="a" style="left:1705px;top:970px;width:106px;height:32px;border:2px solid #e0242c;"></div>
<div class="a" style="left:1803px;top:956.5px;width:22px;height:22px;border-radius:50%;background:#e3212a;box-shadow:1.5px 1.5px 1.5px rgba(0,0,0,0.35);"></div>
<div class="t" style="left:1809.5px;top:960.5px;font-size:12px;font-weight:bold;color:#fff;">1</div>


</body></html>
